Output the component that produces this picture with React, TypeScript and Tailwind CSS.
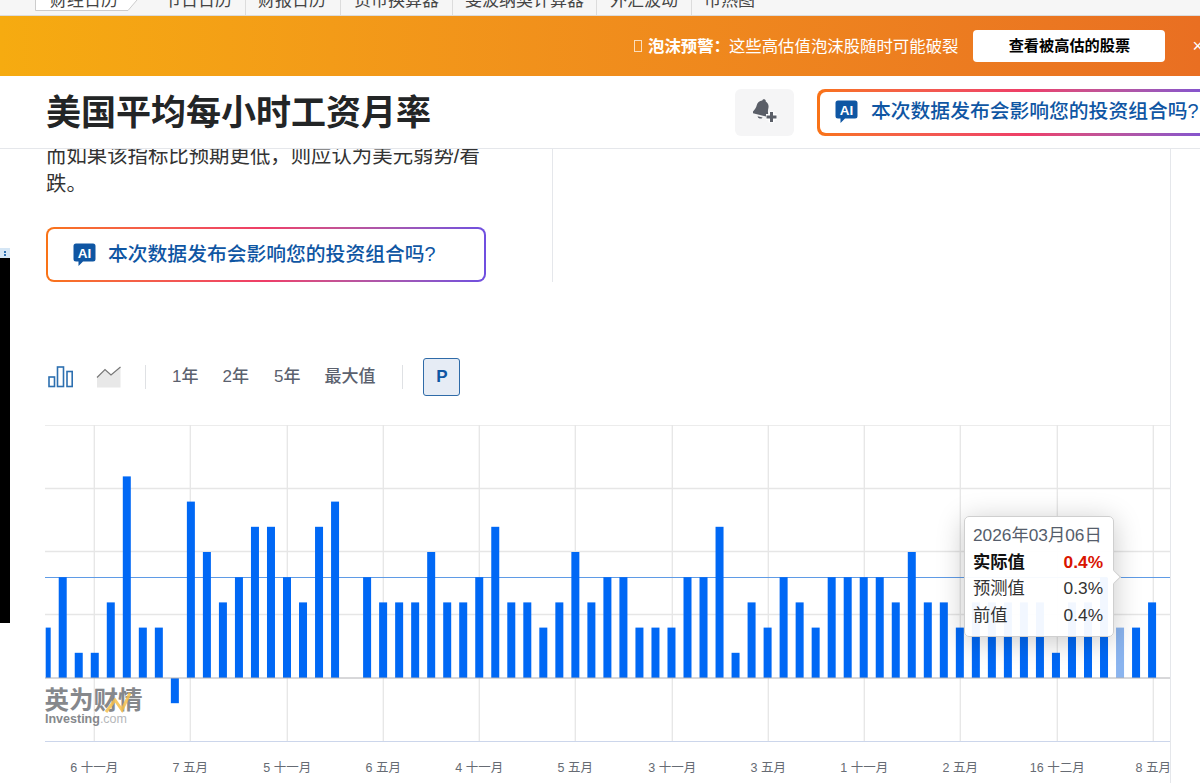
import React from 'react';

const tabs = [
  { label: '节日日历', cls: 'pl-[26px] pr-[13px]' },
  { label: '财报日历', cls: 'px-[12px] pr-[14px]' },
  { label: '货币换算器', cls: 'px-[13px]' },
  { label: '斐波纳契计算器', cls: 'px-[12px]' },
  { label: '外汇波动', cls: 'px-[13px]' },
  { label: '市热图', cls: 'px-[12px] border-r-0' },
];

// value per bar, in tenths of a percent, left to right
const bars = [
  2, 4, 1, 1, 3, 8, 2, 2, -1, 7, 5, 3, 4, 6, 6, 4, 3, 6, 7, 0, 4, 3, 3, 3, 5, 3, 3, 4, 6, 3, 3, 2, 3, 5, 3, 4, 4, 2, 2, 2,
  4, 4, 6, 1, 3, 2, 4, 3, 2, 4, 4, 4, 4, 3, 5, 3, 3, 2, 3, 3, 3, 3, 3, 1, 3, 3, 4, 2, 2, 3,
];

const xLabels = [
  { x: 94.3, t: '6 十一月' },
  { x: 190.3, t: '7 五月' },
  { x: 287.3, t: '5 十一月' },
  { x: 383.3, t: '6 五月' },
  { x: 479.3, t: '4 十一月' },
  { x: 575.3, t: '5 五月' },
  { x: 672.3, t: '3 十一月' },
  { x: 768.3, t: '3 五月' },
  { x: 864.3, t: '1 十一月' },
  { x: 960.3, t: '2 五月' },
  { x: 1057.3, t: '16 十二月' },
  { x: 1153.3, t: '8 五月' },
];

const gridY = [425, 488.5, 551.5, 614.5];

const AiIcon = () => (
  <svg width="23" height="24" viewBox="0 0 23 24" className="shrink-0">
    <path d="M3 0.5h17a2.5 2.5 0 0 1 2.5 2.5v13a2.5 2.5 0 0 1-2.5 2.5H10l-4.5 4.5v-4.5H3A2.5 2.5 0 0 1 .5 16V3A2.5 2.5 0 0 1 3 .5z" fill="#0f56a3" />
    <text x="11.5" y="14.5" textAnchor="middle" fontSize="13.5" fontWeight="700" fill="#fff" fontFamily="Liberation Sans, sans-serif">AI</text>
  </svg>
);

const BellPlus = () => (
  <svg width="26" height="26" viewBox="0 0 26 26">
    <g transform="translate(9 10) rotate(14)" fill="#5b5f68">
      <path d="M0-10c1 0 1.700.7 1.800 1.700C4.600-7.500 6-5 6-2c0 3 .8 5 2.500 7 .4.600 0 1.300-.7 1.300H-7.700c-.7 0-1.100-.7-.7-1.300C-6.800 3-6-.1-6-2c0-3 1.400-5.500 4.200-6.300C-1.700-9.300-1-10 0-10z" />
      <path d="M-2.600 8h5.200a2.800 2.800 0 0 1-5.200 0z" />
    </g>
    <path d="M18.500 12.500v11M13 18h11" stroke="#fff" strokeWidth="6" />
    <path d="M18.500 13v10M13.500 18h10" stroke="#5b5f68" strokeWidth="3" />
  </svg>
);

const AskButton = ({ className, inner, text }: { className: string; inner: string; text: string }) => (
  <div className={`rounded-[8px] p-[2px] bg-gradient-to-r from-[#f97316] via-[#ee3d68] to-[#6f4fe0] ${className}`}>
    <div className={`h-full bg-white rounded-[6px] flex items-center ${inner}`}>
      <AiIcon />
      <span className="text-[19.8px] font-medium text-[#0f56a3] whitespace-nowrap">{text}</span>
    </div>
  </div>
);

const Chart = () => (
  <svg width="1125" height="358" viewBox="45 425 1125 358" className="block">
    {gridY.map(y => (
      <line key={y} x1="45" x2="1170" y1={y} y2={y} stroke="#e6e6e6" strokeWidth="1.3" />
    ))}
    {xLabels.map(l => (
      <line key={l.x} x1={l.x} x2={l.x} y1="425" y2="741" stroke="#e6e6e6" strokeWidth="1.3" />
    ))}
    <line x1="45" x2="1170" y1="741.5" y2="741.5" stroke="#ccd6eb" strokeWidth="1.2" />
    <line x1="45" x2="1170" y1="577.5" y2="577.5" stroke="#5f9be6" strokeWidth="1" />
    {bars.map((v, i) => {
      const x = 42.7 + i * 16.02;
      const left = Math.max(x, 45.7);
      const h = Math.abs(v) * 25.2;
      return (
        <rect
          key={i}
          x={left}
          width={x + 8 - left}
          y={v >= 0 ? 678 - h : 678}
          height={h}
          fill={i === 67 ? '#8ab4ef' : '#0068f5'}
        />
      );
    })}
    <line x1="45" x2="1170" y1="678" y2="678" stroke="#b0b0b4" strokeWidth="1" />
    <text x="44.5" y="709" fontSize="24.5" fontWeight="700" fill="#86888c" fontFamily="Noto Sans CJK SC, sans-serif">英为财情</text>
    <polyline points="106,712 115,700 122,710 130,693" fill="none" stroke="#f5c04c" strokeWidth="3" opacity="0.85" />
    <text x="45" y="723" fontSize="12.5" fontFamily="Liberation Sans, sans-serif" fill="#86888c">
      <tspan fontWeight="700">Investing</tspan>
      <tspan fill="#b5b7ba">.com</tspan>
    </text>
    {xLabels.map(l => (
      <text key={l.x} x={l.x} y="772" textAnchor="middle" fontSize="12.5" fill="#666b73" fontFamily="Liberation Sans, Noto Sans CJK SC, sans-serif">
        {l.t}
      </text>
    ))}
  </svg>
);

const Tip = () => (
  <div className="absolute left-[919px] top-[91px] w-[150px] h-[121px] bg-white/95 border border-[#cfcfcf] rounded-[5px] shadow-[0_4px_28px_rgba(0,0,0,0.22)] pl-[8px] pr-[10px] pt-[5px] text-[17.3px] leading-[26.5px] text-[#333]">
    <div className="absolute -right-[6px] top-[55px] w-[10px] h-[10px] rotate-45 bg-white border-t border-r border-[#cfcfcf]"></div>
    <div className="text-[#555d6b] whitespace-nowrap">2026年03月06日</div>
    <div className="flex justify-between font-bold text-[#111]"><span>实际值</span><span className="text-[#d91400]">0.4%</span></div>
    <div className="flex justify-between"><span>预测值</span><span>0.3%</span></div>
    <div className="flex justify-between"><span>前值</span><span>0.4%</span></div>
  </div>
);

export default function App() {
  return (
    <div className="relative w-[1200px] h-[783px] overflow-hidden bg-white flex flex-col [font-family:'Liberation_Sans','Noto_Sans_CJK_SC',sans-serif]">
      <nav className="h-[16px] shrink-0 overflow-hidden flex bg-[#f6f6f6] border-b border-[#dcdcdc] text-[17px] text-[#444]">
        <div className="relative ml-[35px] w-[103px] h-[30px] -mt-[14px] flex items-center pl-[15px] shrink-0">
          <svg width="103" height="12" viewBox="0 0 103 12" className="absolute left-0 top-[14px]">
            <path d="M.5 0V10.500H93L102 0" fill="#fff" stroke="#ccc" />
          </svg>
          <span className="relative whitespace-nowrap">财经日历</span>
        </div>
        {tabs.map(tab => (
          <div key={tab.label} className={`h-[30px] -mt-[14px] flex items-center whitespace-nowrap border-r border-[#dcdcdc] ${tab.cls}`}>
            {tab.label}
          </div>
        ))}
      </nav>

      <div className="h-[60px] shrink-0 bg-gradient-to-r from-[#f6ab10] to-[#e96f22] flex items-center text-white text-[16.4px] overflow-hidden">
        <div className="ml-[634px] w-[8px] h-[12px] border border-white/70 shrink-0"></div>
        <span className="ml-[6px] font-bold whitespace-nowrap">泡沫预警：</span>
        <span className="whitespace-nowrap -ml-[1px]">这些高估值泡沫股随时可能破裂</span>
        <button className="ml-[15px] w-[192px] h-[32px] shrink-0 bg-white rounded-[4px] text-black text-[15.2px] font-bold">查看被高估的股票</button>
        <span className="ml-[27px] text-[18px] shrink-0">×</span>
      </div>

      <header className="h-[73px] shrink-0 flex items-center pl-[46px] bg-white border-b border-[#e5e7eb] overflow-hidden">
        <h1 className="w-[689px] shrink-0 text-[35px] font-bold text-[#232526] leading-none whitespace-nowrap">美国平均每小时工资月率</h1>
        <div className="w-[59px] h-[47px] shrink-0 bg-[#f5f5f6] rounded-[6px] flex items-center justify-center pl-[2px]">
          <BellPlus />
        </div>
        <AskButton className="ml-[23px] w-[420px] h-[47px] shrink-0 p-[3px]" inner="pl-[15px] gap-[13px]" text="本次数据发布会影响您的投资组合吗?" />
      </header>

      <main className="flex-1 w-[1171px] border-r border-[#e5e7eb] overflow-hidden">
        <div className="flex pl-[46px]">
          <div className="w-[440px] shrink-0">
            <p className="-mt-[7px] text-[20.4px] leading-[28px] text-[#333]">而如果该指标比预期更低，则应认为美元弱势/看跌。</p>
            <AskButton className="mt-[29px] h-[55px]" inner="pl-[25px] gap-[12px]" text="本次数据发布会影响您的投资组合吗?" />
          </div>
          <div className="ml-[66px] border-l border-[#e5e7eb]"></div>
        </div>

        <div className="mt-[76px] h-[38px] flex items-center text-[17px] font-medium text-[#5b616e]">
          <svg width="26" height="22" viewBox="0 0 26 22" className="ml-[47px] shrink-0">
            <g fill="none" stroke="#2c6fb0" strokeWidth="1.6">
              <rect x="2" y="11" width="5.500" height="9.500" />
              <rect x="10.500" y="1" width="6" height="19.500" />
              <rect x="20" y="5.500" width="5.200" height="15" />
            </g>
          </svg>
          <svg width="26" height="22" viewBox="0 0 26 22" className="ml-[23px] shrink-0">
            <path d="M1 11.500L9 3.500L15 9L24.500 1V21.500H1z" fill="#e8e8e8" />
            <path d="M1 11.500L9 3.500L15 9L24.500 1" fill="none" stroke="#777" strokeWidth="1.200" />
          </svg>
          <div className="ml-[23px] w-px h-[24px] bg-[#dfe1e4]"></div>
          <span className="ml-[26px]">1年</span>
          <span className="ml-[24px]">2年</span>
          <span className="ml-[25px]">5年</span>
          <span className="ml-[24px]">最大值</span>
          <div className="ml-[27px] w-px h-[24px] bg-[#dfe1e4]"></div>
          <div className="ml-[20px] w-[37px] h-[38px] rounded-[3px] border border-[#2f6ba8] bg-[#e6ecf5] flex items-center justify-center font-bold text-[#0f56a3]">P</div>
        </div>

        <div className="relative mt-[29px] ml-[45px]">
          <Chart />
          <Tip />
        </div>
      </main>

      {/* clipped browser side widget */}
      <div className="absolute left-0 top-[248px] w-[10px] flex flex-col">
        <div className="h-[10px] bg-[#d5e6f5] flex flex-col items-center justify-center gap-px">
          <span className="w-[2px] h-[2px] bg-[#2c6fb0]"></span>
          <span className="w-[2px] h-[2px] bg-[#2c6fb0]"></span>
        </div>
        <div className="h-[365px] bg-black"></div>
      </div>
    </div>
  );
}
